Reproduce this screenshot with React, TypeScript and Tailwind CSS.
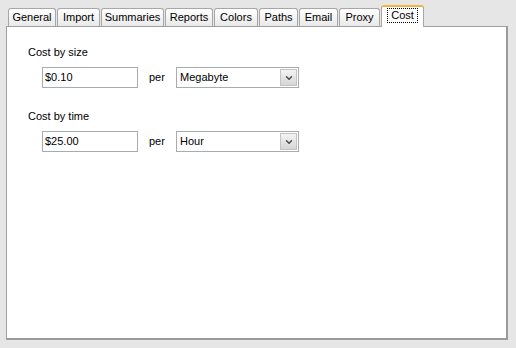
import { ChevronDown } from "lucide-react";

const tabs = [
  { name: "General", w: "w-[48px]" },
  { name: "Import", w: "w-[43px]" },
  { name: "Summaries", w: "w-[63px]" },
  { name: "Reports", w: "w-[48px]" },
  { name: "Colors", w: "w-[44px]" },
  { name: "Paths", w: "w-[39px]" },
  { name: "Email", w: "w-[39px]" },
  { name: "Proxy", w: "w-[41px]" },
];

const CostRow = ({ label, value, unit }: { label: string; value: string; unit: string }) => (
  <div className="flex flex-col">
    <div className="pl-[21px] pt-[1px] leading-[13px]">{label}</div>
    <div className="flex items-center mt-[8px] pl-[35px]">
      <div className="w-[96px] h-[21px] border border-[#a5acb2] bg-white flex items-center pl-[2px] leading-[13px]">
        {value}
      </div>
      <span className="w-[38px] pl-[11px] leading-[13px] pb-[1px]">per</span>
      <div className="w-[123px] h-[21px] border border-[#a5acb2] bg-white flex items-center justify-between pl-[3px] pr-[1px]">
        <span className="leading-[13px]">{unit}</span>
        <div className="w-[17px] h-[17px] border border-[#c3c3c3] bg-gradient-to-b from-[#f4f4f4] to-[#d6d6d6] flex items-center justify-center">
          <ChevronDown className="w-[10px] h-[10px] text-[#4d4d4d]" strokeWidth={3.5} />
        </div>
      </div>
    </div>
  </div>
);

export default function App() {
  return (
    <div
      className="w-[516px] h-[348px] bg-[#e6e6e6] pt-[5px] pl-[6px] text-[11px] text-black"
      style={{ fontFamily: '"Liberation Sans", Arial, sans-serif' }}
    >
      <div className="flex items-end h-[21px] pl-[2px] gap-[1px] relative z-10">
        {tabs.map((t) => (
          <div
            key={t.name}
            className={`${t.w} h-[18px] border border-b-0 border-[#a7a7a7] rounded-t-[3px] bg-gradient-to-b from-white to-[#e9e9e9] flex items-center justify-center leading-[13px]`}
          >
            {t.name}
          </div>
        ))}
        <div className="w-[43px] h-[22px] -mb-px border border-b-0 border-[#a7a7a7] border-t-2 border-t-[#f5b33f] rounded-t-[3px] bg-white flex items-start justify-center pt-[1px]">
          <span className="border border-dotted border-black px-[3px] leading-[13px]">Cost</span>
        </div>
      </div>
      <div className="w-[502px] h-[314px] bg-white border border-[#a0a0a0] border-r-2 border-b-2 border-r-[#9a9a9a] border-b-[#9a9a9a] pt-[18px] flex flex-col gap-[21px]">
        <CostRow label="Cost by size" value="$0.10" unit="Megabyte" />
        <CostRow label="Cost by time" value="$25.00" unit="Hour" />
      </div>
    </div>
  );
}
